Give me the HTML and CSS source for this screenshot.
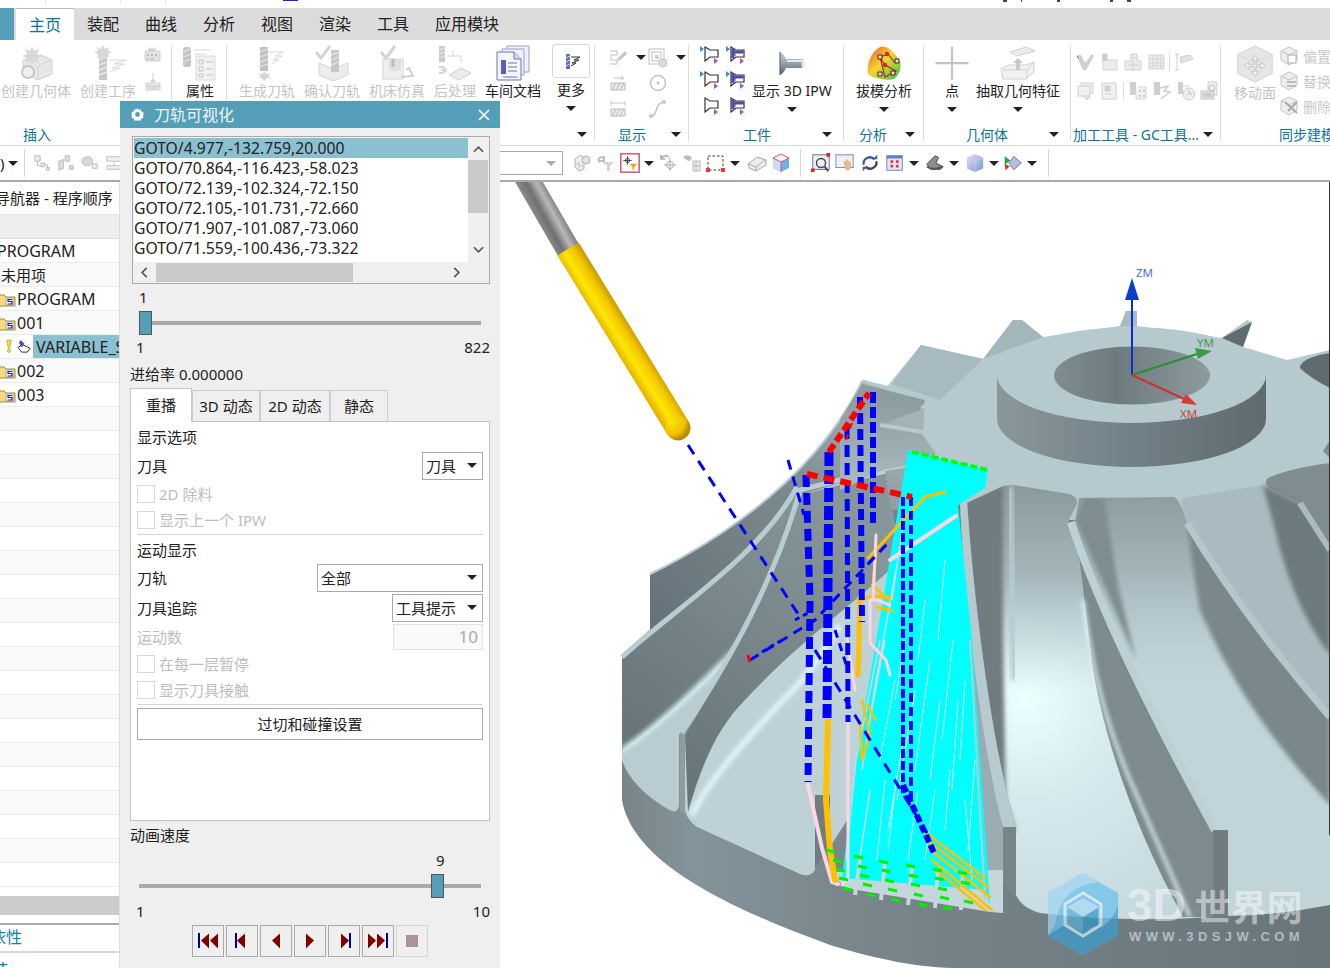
FILE: index.html
```html
<!DOCTYPE html>
<html lang="zh">
<head>
<meta charset="utf-8">
<title>刀轨可视化</title>
<link rel="stylesheet" href="styles.css">
</head>
<body>
<svg class="sprite" aria-hidden="true">
<defs>
<linearGradient id="gIpw" x1="0" y1="0" x2="0" y2="1"><stop offset="0" stop-color="#c6d0d8"/><stop offset=".35" stop-color="#a4b2bc"/><stop offset="1" stop-color="#56646e"/></linearGradient>
<linearGradient id="gDraft" x1="0" y1="0" x2="1" y2="1"><stop offset="0" stop-color="#f04a2a"/><stop offset=".45" stop-color="#f6d52c"/><stop offset="1" stop-color="#37c24a"/></linearGradient>
<linearGradient id="gCube" x1="0" y1="0" x2="1" y2="1"><stop offset="0" stop-color="#dfe6f6"/><stop offset="1" stop-color="#7f93d0"/></linearGradient>
</defs>
<symbol id="s-geom" viewBox="0 0 36 36"><path d="M5 15l18-5 11 5v14l-14 6-15-7z" fill="#e6e6e6" stroke="#cfcfcf"/><path d="M20 21v14M20 21l14-6" fill="none" stroke="#d4d4d4"/><circle cx="10" cy="27" r="6" fill="#f0f0f0" stroke="#bdbdbd" stroke-width="1.5"/><path d="M14 1l2 5 5-2-2 5 5 2-5 2 2 5-5-2-2 5-2-5-5 2 2-5-5-2 5-2-2-5 5 2z" fill="#d8d8d8"/></symbol>
<symbol id="s-oper" viewBox="0 0 36 36"><path d="M9 11h8v24H9z" fill="#c6c6c6"/><path d="M9 15l8-3M9 20l8-3M9 25l8-3M9 30l8-3" stroke="#e9e9e9" stroke-width="1.5"/><path d="M18 15h18l-12 4h10l-12 4h8l-10 4" fill="none" stroke="#d8d8d8"/><path d="M13 0l2 4 4-2-1 4 4 1-4 2 1 4-4-1-2 3-2-3-4 1 1-4-4-2 4-1-1-4 4 2z" fill="#d8d8d8"/></symbol>
<symbol id="s-sm1" viewBox="0 0 20 20"><rect x="2" y="6" width="15" height="10" rx="1" fill="#e2e2e2" stroke="#cfcfcf"/><path d="M4 9h2v2H4zM8 9h2v2H8zM12 9h2v2h-2zM4 13h2v2H4zM8 13h2v2H8z" fill="#bcbcbc"/><path d="M9 1l1 3 3-1-1 3H6L5 3l3 1z" fill="#cfcfcf"/></symbol>
<symbol id="s-sm2" viewBox="0 0 20 20"><path d="M3 11h14v7H3z" fill="#ececec" stroke="#cfcfcf"/><path d="M3 14h14M5 16h10" stroke="#c4c4c4"/><path d="M7 10l3-4 3 4z" fill="#d2d2d2"/><path d="M10 1v5" stroke="#d2d2d2"/></symbol>
<symbol id="s-attr" viewBox="0 0 36 36"><rect x="1" y="2" width="8" height="20" rx="3" fill="#c4c4c4"/><path d="M1 7l8-3M1 12l8-3M1 17l8-3" stroke="#ebebeb"/><path d="M12 5h16M12 9h12" stroke="#d9d9d9"/><path d="M14 11h19v24H14z" fill="#f2f2f2" stroke="#d8d8d8"/><path d="M17 15h4v4h-4zM17 22h4v4h-4zM17 29h4v3h-4z" fill="none" stroke="#c5c5c5"/><path d="M24 17h7M24 24h7M24 30h7" stroke="#c5c5c5"/></symbol>
<symbol id="s-gen" viewBox="0 0 36 36"><rect x="11" y="2" width="8" height="24" fill="#c2c2c2"/><path d="M11 7l8-3M11 12l8-3M11 17l8-3M11 22l8-3" stroke="#ebebeb"/><path d="M20 7h15l-9 4h7l-9 4h6l-8 4" fill="none" stroke="#d9d9d9"/><path d="M15 26l2 3 4-1-2 3 3 2-4 0-3 3-2-3-4 0 3-2-2-3 4 1z" fill="#d4d4d4"/></symbol>
<symbol id="s-verify" viewBox="0 0 36 36"><path d="M5 18l14 6 15-6v12l-15 6-14-6z" fill="#ececec" stroke="#d4d4d4"/><rect x="17" y="5" width="8" height="22" fill="#c8c8c8"/><path d="M17 10l8-3M17 15l8-3M17 20l8-3" stroke="#ececec"/><path d="M2 7l5 6 9-12" fill="none" stroke="#d4d4d4" stroke-width="3"/></symbol>
<symbol id="s-sim" viewBox="0 0 36 36"><path d="M4 14h20v20H4z" fill="#efefef" stroke="#d4d4d4"/><path d="M10 14h12v12H10z" fill="#e0e0e0"/><path d="M14 14v8" stroke="#bcbcbc" stroke-width="3"/><path d="M22 32l12-1-4-8-3 2" fill="none" stroke="#d0d0d0" stroke-width="2"/><path d="M2 7l5 6 9-12" fill="none" stroke="#d4d4d4" stroke-width="3"/></symbol>
<symbol id="s-post" viewBox="0 0 36 36"><rect x="2" y="1" width="6" height="16" fill="#c8c8c8"/><path d="M2 5l6-2M2 9l6-2M2 13l6-2" stroke="#ececec"/><path d="M10 11h14v6M16 11v-6" fill="none" stroke="#d4d4d4"/><path d="M12 30l12-7 10 5-12 7z" fill="#ececec" stroke="#d0d0d0"/><path d="M2 22h4l3 3-3 3H2M9 25H4" fill="none" stroke="#d4d4d4" stroke-width="2"/></symbol>
<symbol id="s-doc" viewBox="0 0 36 36"><path d="M12 1h22v26H12z" fill="#eef0fa" stroke="#9c9fd0"/><path d="M7 4h22v26H7z" fill="#eef0fa" stroke="#9c9fd0"/><path d="M2 7h17l7 7v21H2z" fill="#f4f5fc" stroke="#6f72b8"/><path d="M19 7v7h7" fill="#d8dbf4" stroke="#6f72b8"/><rect x="6" y="15" width="5" height="14" fill="#5a60b5"/><path d="M13 18h9M13 22h9M13 26h9M8 32h14" stroke="#6f72b8"/></symbol>
<symbol id="s-more" viewBox="0 0 20 20"><rect x="5" y="3" width="4" height="15" fill="#6569b8"/><path d="M5 7l4-2M5 11l4-2M5 15l4-2" stroke="#d6d7f0"/><path d="M10 6h9l-6 3h5l-7 3h4l-5 3" fill="none" stroke="#333"/></symbol>
<symbol id="s-d1" viewBox="0 0 20 20"><path d="M2 3h7v4H3v5h6v4H2" fill="none" stroke="#bfbfbf"/><path d="M9 11l8-8 2 3-8 7z" fill="#c8c8c8"/></symbol>
<symbol id="s-d2" viewBox="0 0 20 20"><rect x="1" y="1" width="15" height="15" fill="none" stroke="#bdbdbd"/><rect x="4" y="4" width="9" height="9" fill="none" stroke="#bdbdbd"/><rect x="7" y="7" width="4" height="4" fill="#d0d0d0"/><circle cx="15" cy="15" r="4" fill="#dcdcdc" stroke="#c4c4c4"/></symbol>
<symbol id="s-d3" viewBox="0 0 20 20"><path d="M3 10h14v7H3z" fill="#eaeaea" stroke="#bcbcbc"/><path d="M4 17l4-7M8 17l4-7M12 17l4-7" stroke="#bcbcbc"/><path d="M6 5h10M13 3l3 2-3 2" fill="none" stroke="#c6c6c6"/></symbol>
<symbol id="s-d4" viewBox="0 0 20 20"><circle cx="10" cy="10" r="7.5" fill="none" stroke="#c4c4c4" stroke-width="1.5"/><circle cx="10" cy="10" r="1.5" fill="#c0c0c0"/></symbol>
<symbol id="s-d5" viewBox="0 0 20 20"><path d="M3 10h14v7H3z" fill="#eaeaea" stroke="#bcbcbc"/><path d="M4 17l4-7M8 17l4-7M12 17l4-7" stroke="#bcbcbc"/><path d="M3 4h14M3 2v5M17 2v5" fill="none" stroke="#c6c6c6"/></symbol>
<symbol id="s-d6" viewBox="0 0 20 20"><path d="M3 17c7 1 3-13 13-14" fill="none" stroke="#c4c4c4" stroke-width="1.5"/><circle cx="3" cy="17" r="2" fill="#c8c8c8"/><circle cx="16" cy="3" r="2" fill="#c8c8c8"/></symbol>
<symbol id="s-wa" viewBox="0 0 20 20"><path d="M5 2l5 3h8v7h-8l-5 4z" fill="#fff" stroke="#333" stroke-width="1.2"/><path d="M0 1l4 3-4 3z" fill="#3d8ccb"/><path d="M14 13l4 3-4 3z" fill="#b94ac9"/></symbol>
<symbol id="s-wb" viewBox="0 0 20 20"><path d="M5 2l5 3h8v7h-8l-5 4z" fill="#fff" stroke="#333" stroke-width="1.2"/><path d="M8 6h9v2H9v3" fill="#4a4aa8" stroke="#4a4aa8"/><path d="M7 4v9" stroke="#4a4aa8" stroke-width="3"/><path d="M0 1l4 3-4 3z" fill="#3d8ccb"/><path d="M14 13l4 3-4 3z" fill="#b94ac9"/></symbol>
<symbol id="s-wc" viewBox="0 0 20 20"><path d="M5 2l5 3h8v7h-8l-5 4z" fill="#fff" stroke="#333" stroke-width="1.2"/><path d="M14 13l4 3-4 3z" fill="#b94ac9"/></symbol>
<symbol id="s-wd" viewBox="0 0 20 20"><path d="M5 2l5 3h8v7h-8l-5 4z" fill="#fff" stroke="#333" stroke-width="1.2"/><path d="M8 6h9v2H9v3" fill="#4a4aa8" stroke="#4a4aa8"/><path d="M7 4v9" stroke="#4a4aa8" stroke-width="3"/><path d="M14 13l4 3-4 3z" fill="#b94ac9"/></symbol>
<symbol id="s-ipw" viewBox="0 0 36 36"><path d="M6 7q4 2 6 7h17v9H12q-2 5-6 7z" fill="url(#gIpw)"/><path d="M6 7v23" stroke="#4c5862"/><path d="M13 16h15" stroke="#e4eaee" stroke-width="2"/><ellipse cx="29" cy="18.500" rx="1.500" ry="4.500" fill="#dde4ea"/></symbol>
<symbol id="s-draft" viewBox="0 0 36 36"><path d="M14 2c8-2 14 5 20 14 2 6-1 15-6 18-8 2-22-1-26-5C0 19 6 6 14 2z" fill="url(#gDraft)"/><path d="M14 12l5 20 11-6-11-6zM14 12l8-3 7 9" fill="none" stroke="#b02a2a" stroke-width="1.2"/><path d="M12 10h4v4h-4zM25 26h4v4h-4zM12 27h4v4h-4zM29 14h4v4h-4z" fill="#f6e86a" stroke="#3a1d6e"/><circle cx="21" cy="9" r="2.2" fill="#c92a2a"/><circle cx="19" cy="20" r="2.2" fill="#c92a2a"/></symbol>
<symbol id="s-pt" viewBox="0 0 24 24"><path d="M12 1v22M1 12h22" stroke="#c4c4c4" stroke-width="1.5"/></symbol>
<symbol id="s-ext" viewBox="0 0 36 36"><path d="M10 7l16-5 9 4-18 5z" fill="#ececec" stroke="#d0d0d0"/><path d="M1 24l8-4h17l8-3v10l-8 7H3z" fill="#f1f1f1" stroke="#cfcfcf"/><path d="M3 25h24l7-8M27 25v9" fill="none" stroke="#cfcfcf"/><path d="M18 13l5 5h-3v7h-4v-7h-3z" fill="#c8c8c8"/></symbol>
<symbol id="s-g1" viewBox="0 0 20 20"><path d="M1 3l5 0 4 8 7-9 2 2-8 14h-3z" fill="#d0d0d0"/><path d="M2 3l2 2 0 3" stroke="#e8e8e8"/></symbol>
<symbol id="s-g2" viewBox="0 0 20 20"><path d="M4 2h4v6h10v10H4z" fill="#ececec" stroke="#d6d6d6"/><rect x="3" y="2" width="5" height="7" fill="#cfcfcf"/></symbol>
<symbol id="s-g3" viewBox="0 0 20 20"><path d="M2 9h6V2h6v7h4v9H2z" fill="#ececec" stroke="#cfcfcf"/><path d="M8 6h6M5 13h10M10 9v9" stroke="#cfcfcf"/></symbol>
<symbol id="s-g4" viewBox="0 0 20 20"><rect x="2" y="3" width="15" height="14" fill="#eee" stroke="#d4d4d4"/><path d="M2 7h15M2 11h15M2 14h15M6 3v14M10 3v14M14 3v14" stroke="#d4d4d4"/></symbol>
<symbol id="s-g5" viewBox="0 0 20 20"><path d="M3 2v16M1 2h4M1 18h4" stroke="#cfcfcf" fill="none"/><path d="M6 5l10-2 3 4-12 4z" fill="#e4e4e4" stroke="#cfcfcf"/></symbol>
<symbol id="s-g6" viewBox="0 0 20 20"><rect x="6" y="2" width="12" height="10" fill="#f0f0f0" stroke="#d0d0d0"/><rect x="3" y="5" width="12" height="10" fill="#f0f0f0" stroke="#d0d0d0"/><path d="M8 15l4 4 3-4" fill="#e0e0e0" stroke="#cfcfcf"/></symbol>
<symbol id="s-g7" viewBox="0 0 20 20"><rect x="3" y="2" width="14" height="16" fill="#f2f2f2" stroke="#cfcfcf"/><path d="M6 5h5v5H6zM6 13h8" fill="#d0d0d0" stroke="#cfcfcf"/></symbol>
<symbol id="s-g8" viewBox="0 0 20 20"><rect x="2" y="1" width="6" height="13" fill="#cfcfcf"/><path d="M10 6h8v12H8v-5" fill="#f2f2f2" stroke="#d4d4d4"/><path d="M11 9h2v2h-2zM15 9h2v2h-2zM11 14h2v2h-2zM15 14h2v2h-2z" fill="#c8c8c8"/></symbol>
<symbol id="s-g9" viewBox="0 0 20 20"><rect x="2" y="1" width="6" height="13" fill="#cfcfcf"/><path d="M8 7l8-2-4 5 6 1-9 7" fill="none" stroke="#cfcfcf" stroke-width="1.5"/></symbol>
<symbol id="s-g10" viewBox="0 0 20 20"><rect x="2" y="1" width="5" height="12" fill="#cfcfcf"/><path d="M7 5h7" stroke="#cfcfcf"/><circle cx="13" cy="13" r="6" fill="#ededed" stroke="#cccccc"/><path d="M13 9v4h3" stroke="#bbb" fill="none"/></symbol>
<symbol id="s-g11" viewBox="0 0 20 20"><path d="M8 1h9v13H8z" fill="#eee" stroke="#cfcfcf"/><path d="M1 10h13v8H1z" fill="#dedede" stroke="#c8c8c8"/><circle cx="12" cy="7" r="3" fill="none" stroke="#bbb"/><path d="M3 13h9M3 15h9" stroke="#bbb"/></symbol>
<symbol id="s-move" viewBox="0 0 44 44"><path d="M22 1l20 10v22L22 43 2 33V11z" fill="#e6e6e6" stroke="#cfcfcf"/><path d="M2 11l20 10 20-10" fill="none" stroke="#d4d4d4"/><path d="M22 12l4 5h-3v6h6v-3l5 4-5 4v-3h-6v6h3l-4 5-4-5h3v-6h-6v3l-5-4 5-4v3h6v-6h-3z" fill="#f7f7f7" stroke="#bdbdbd"/></symbol>
<symbol id="s-y1" viewBox="0 0 20 20"><path d="M1 5l8-4 8 4v9l-8 5-8-5z" fill="#eee" stroke="#c4c4c4"/><path d="M1 5l8 4 8-4" fill="none" stroke="#c4c4c4"/><rect x="8" y="9" width="8" height="8" fill="#fff" stroke="#aaa"/></symbol>
<symbol id="s-y2" viewBox="0 0 20 20"><path d="M1 5l8-4 8 4v9l-8 5-8-5z" fill="#eee" stroke="#c4c4c4"/><path d="M1 5l8 4 8-4" fill="none" stroke="#c4c4c4"/><path d="M7 11h9M7 15h9" stroke="#aaa" stroke-width="1.5"/></symbol>
<symbol id="s-y3" viewBox="0 0 20 20"><path d="M1 5l8-4 8 4v9l-8 5-8-5z" fill="#eee" stroke="#c4c4c4"/><path d="M1 5l8 4 8-4" fill="none" stroke="#c4c4c4"/><path d="M5 6l12 11M8 15l9-9" stroke="#aaa" stroke-width="2"/></symbol>
<symbol id="s-q1" viewBox="0 0 20 20"><path d="M2 2h6v6H2zM9 10h4v4H9zM15 15h3v3h-3z" fill="#ececec" stroke="#b6b6b6"/><path d="M5 8v5h4M13 12h3v3" fill="none" stroke="#b6b6b6"/></symbol>
<symbol id="s-q2" viewBox="0 0 20 20"><path d="M2 8l5-2v10l-5 2zM9 2h5v6H9zM14 13h4v4h-4z" fill="#ddd" stroke="#b6b6b6"/></symbol>
<symbol id="s-q3" viewBox="0 0 20 20"><ellipse cx="7" cy="8" rx="6" ry="5" fill="#d8d8d8" stroke="#bbb"/><path d="M13 11h5v5h-5z" fill="#f0f0f0" stroke="#b6b6b6"/></symbol>
<symbol id="s-q5" viewBox="0 0 20 20"><path d="M2 3h16v5H2zM2 13h16v4H2z" fill="#f0f0f0" stroke="#bbb"/><path d="M10 8v5" stroke="#bbb"/></symbol>
<symbol id="s-f1" viewBox="0 0 20 20"><path d="M3 14V6l6-4 3 4v10l-5 2z" fill="#f0f0f0" stroke="#b4b4b4"/><circle cx="14" cy="7" r="4" fill="#e0e0e0" stroke="#b4b4b4"/><path d="M7 8v8M3 10l9 4" stroke="#c4c4c4"/></symbol>
<symbol id="s-f2" viewBox="0 0 20 20"><path d="M4 9c-4-2 0-6 4-4M8 3v5H3" fill="none" stroke="#bdbdbd" stroke-width="2"/><path d="M6 9h12l-4 4v5h-3v-5z" fill="#d6d6d6"/></symbol>
<symbol id="s-f3" viewBox="0 0 24 24"><rect x="1" y="1" width="22" height="22" fill="#fff" stroke="#c83c46" stroke-width="1.5"/><path d="M9 4v10M4 9h10" stroke="#333"/><circle cx="9" cy="9" r="2.5" fill="none" stroke="#333"/><path d="M12 13h9l-4 4v3h-2v-3z" fill="#e8a81c"/></symbol>
<symbol id="s-f4" viewBox="0 0 20 20"><path d="M12 5v13M6 12h12" stroke="#aaa"/><circle cx="12" cy="12" r="3.5" fill="none" stroke="#aaa"/><path d="M3 6c2-4 6-4 8-2M3 2v4h4" fill="none" stroke="#aaa" stroke-width="1.5"/></symbol>
<symbol id="s-f5" viewBox="0 0 20 20"><path d="M1 4c3-3 8-2 9 1l-2 3c-3-1-5-1-7-4z" fill="#bdbdbd"/><path d="M11 8h7v10h-7z" fill="#eee" stroke="#b4b4b4"/><path d="M14 8v10M11 13h7" stroke="#b4b4b4"/></symbol>
<symbol id="s-f6" viewBox="0 0 20 20"><rect x="2" y="3" width="15" height="14" fill="none" stroke="#333" stroke-dasharray="2.5 2"/><path d="M0 15h4v4H0zM15 15h4v4h-4z" fill="#e5393b"/></symbol>
<symbol id="s-f7" viewBox="0 0 20 20"><path d="M1 11l9-7 9 3v5l-10 6-7-3z" fill="#ececec" stroke="#a8a8a8"/><path d="M2 11l7 3 9-7M9 14v4" fill="none" stroke="#a8a8a8"/></symbol>
<symbol id="s-f8" viewBox="0 0 20 20"><path d="M10 1l8 4v10l-8 4-8-4V5z" fill="#6fb0e6"/><path d="M2 5l8 4v10l-8-4z" fill="#c8def2"/><path d="M10 1l8 4-8 4-8-4z" fill="#f2f4fa" stroke="#d85a6a"/><path d="M10 9v10" stroke="#d85a6a"/></symbol>
<symbol id="s-v1" viewBox="0 0 22 22"><rect x="2" y="2" width="18" height="16" fill="#eef1fa" stroke="#4f68a8"/><circle cx="11" cy="11" r="5" fill="none" stroke="#444" stroke-width="1.5"/><path d="M15 15l4 5" stroke="#444" stroke-width="2"/><path d="M0 17h4v4H0zM17 0h4v4h-4z" fill="#d62b2b"/></symbol>
<symbol id="s-v2" viewBox="0 0 22 22"><rect x="1" y="2" width="19" height="14" fill="#eef1fa" stroke="#6d84b8"/><path d="M9 9l3 0 1-3 2 3 2 0 1 5-2 5h-4z" fill="#e8b986"/></symbol>
<symbol id="s-v3" viewBox="0 0 22 22"><path d="M4 13a7 7 0 0 1 12-6" fill="none" stroke="#3c5aa6" stroke-width="2.5"/><path d="M18 9a7 7 0 0 1-12 6" fill="none" stroke="#444" stroke-width="2.5"/><path d="M14 7h5V2zM8 15H3v5z" fill="#3c5aa6"/></symbol>
<symbol id="s-v4" viewBox="0 0 22 22"><rect x="2" y="3" width="17" height="16" fill="#e2e6f6" stroke="#6d7cc0"/><rect x="2" y="3" width="17" height="3" fill="#6d7cc0"/><path d="M6 8h3v3H6zM12 8h3v3h-3zM6 13h3v3H6zM12 13h3v3h-3z" fill="#e23b3b"/></symbol>
<symbol id="s-v5" viewBox="0 0 22 22"><path d="M2 12l9-9 4 2-3 6 8 4-3 3H6z" fill="#8c8c8c" stroke="#444"/><path d="M2 15c4 3 12 3 17 0" fill="none" stroke="#555" stroke-width="2"/></symbol>
<symbol id="s-v6" viewBox="0 0 22 22"><path d="M11 1l9 4v12l-9 4-9-4V5z" fill="url(#gCube)"/><path d="M2 5l9 4 9-4M11 9v12" fill="none" stroke="#c6cfe8"/></symbol>
<symbol id="s-v7" viewBox="0 0 24 22"><path d="M13 3l9 8-9 8-6-8z" fill="#b4bedd" stroke="#5b6ea6"/><path d="M2 3l7 5-7 5z" fill="#27a744"/><path d="M2 12l6 3-5 5z" fill="#d8323c"/></symbol>
<symbol id="s-folder" viewBox="0 0 16 16"><path d="M-4 3h8l2 2h9v9H-4z" fill="#f6dc7a" stroke="#9a8a46"/><rect x="6" y="6" width="7" height="7" fill="#fff" stroke="#8a8a8a" stroke-width=".6"/><path d="M12 7.5H8V9.5h4V12H7.5" fill="none" stroke="#1414d0" stroke-width="1.2"/></symbol>
<symbol id="s-warn" viewBox="0 0 10 18"><path d="M2 1h6L6 11H4z" fill="#f6dc3c" stroke="#a0921c" stroke-width=".7"/><circle cx="5" cy="14.5" r="2" fill="#f6dc3c" stroke="#a0921c" stroke-width=".7"/></symbol>
<symbol id="s-opn" viewBox="0 0 16 16"><path d="M1 9l5-3 8 4-3 4H5z" fill="#fff" stroke="#222"/><path d="M4 1l4 4-3 4-3-5z" fill="#4a55b8"/></symbol>
<symbol id="p-first" viewBox="0 0 20 16"><rect y="0" width="2" height="15" fill="#000080"/><path d="M3 7.5l8-7v15zM12 7.5l8-7v15z" fill="#800000"/></symbol>
<symbol id="p-prev" viewBox="0 0 20 16"><rect x="3" width="2" height="15" fill="#000080"/><path d="M5 7.5l8-7v15z" fill="#800000"/></symbol>
<symbol id="p-back" viewBox="0 0 20 16"><path d="M6 7.5l8-7v15z" fill="#800000"/></symbol>
<symbol id="p-play" viewBox="0 0 20 16"><path d="M14 7.5l-8-7v15z" fill="#800000"/></symbol>
<symbol id="p-next" viewBox="0 0 20 16"><rect x="15" width="2" height="15" fill="#000080"/><path d="M15 7.5l-8-7v15z" fill="#800000"/></symbol>
<symbol id="p-last" viewBox="0 0 20 16"><rect x="18" width="2" height="15" fill="#000080"/><path d="M17 7.5l-8-7v15zM8 7.5l-8-7v15z" fill="#800000"/></symbol>
</svg>

<div class="app">
  <div class="topstrip">
    <i class="tick t1"></i><i class="tick t2"></i><i class="tick t3"></i><i class="blueb"></i>
    <i class="mark m-a"></i><i class="mark m-b"></i><i class="mark m-c"></i><i class="mark m-d"></i><i class="mark m-e"></i>
  </div>

  <div class="tabbar">
    <span class="filebtn"></span>
    <span class="tab active">主页</span><span class="tab">装配</span><span class="tab">曲线</span><span class="tab">分析</span><span class="tab">视图</span><span class="tab">渲染</span><span class="tab">工具</span><span class="tab">应用模块</span>
  </div>

  <div class="ribbon">
    <section class="grp g-insert">
      <div class="grp-body">
        <div class="tool"><svg class="ic36"><use href="#s-geom"/></svg><span class="off">创建几何体</span></div>
        <div class="tool"><svg class="ic36"><use href="#s-oper"/></svg><span class="off">创建工序</span></div>
        <div class="smcol"><svg class="ic20"><use href="#s-sm1"/></svg><svg class="ic20"><use href="#s-sm2"/></svg></div>
        <i class="vsep"></i>
        <div class="tool t-attr"><svg class="ic36"><use href="#s-attr"/></svg><span>属性</span></div>
        <i class="vsep v2"></i>
        <div class="tool"><svg class="ic36"><use href="#s-gen"/></svg><span class="off">生成刀轨</span></div>
        <div class="tool"><svg class="ic36"><use href="#s-verify"/></svg><span class="off">确认刀轨</span></div>
        <div class="tool"><svg class="ic36"><use href="#s-sim"/></svg><span class="off">机床仿真</span></div>
        <div class="tool"><svg class="ic36"><use href="#s-post"/></svg><span class="off">后处理</span></div>
        <div class="tool"><svg class="ic36"><use href="#s-doc"/></svg><span>车间文档</span></div>
        <div class="tool t-more"><span class="morebox"><svg class="ic20"><use href="#s-more"/></svg></span><span>更多</span><i class="arr"></i></div>
      </div>
      <div class="grp-label"><span class="lb-insert">插入</span><i class="arr"></i></div>
    </section>

    <section class="grp g-show">
      <div class="grp-body">
        <div class="showgrid">
          <span class="cell"><svg class="ic20"><use href="#s-d1"/></svg><i class="arr"></i></span>
          <span class="cell"><svg class="ic20"><use href="#s-d2"/></svg><i class="arr"></i></span>
          <span class="cell"><svg class="ic20"><use href="#s-d3"/></svg></span>
          <span class="cell"><svg class="ic20"><use href="#s-d4"/></svg></span>
          <span class="cell"><svg class="ic20"><use href="#s-d5"/></svg></span>
          <span class="cell"><svg class="ic20"><use href="#s-d6"/></svg></span>
        </div>
      </div>
      <div class="grp-label"><span class="lb-show">显示</span><i class="arr"></i></div>
    </section>

    <section class="grp g-part">
      <div class="grp-body">
        <div class="wpgrid">
          <svg class="ic20"><use href="#s-wa"/></svg><svg class="ic20"><use href="#s-wb"/></svg>
          <svg class="ic20"><use href="#s-wa"/></svg><svg class="ic20"><use href="#s-wb"/></svg>
          <svg class="ic20"><use href="#s-wc"/></svg><svg class="ic20"><use href="#s-wd"/></svg>
        </div>
        <div class="tool t-ipw"><svg class="ic36"><use href="#s-ipw"/></svg><span>显示 3D IPW</span><i class="arr"></i></div>
      </div>
      <div class="grp-label"><span class="lb-part">工件</span><i class="arr"></i></div>
    </section>

    <section class="grp g-ana">
      <div class="grp-body">
        <div class="tool t-draft"><svg class="ic36"><use href="#s-draft"/></svg><span>拔模分析</span><i class="arr"></i></div>
      </div>
      <div class="grp-label"><span class="lb-ana">分析</span><i class="arr"></i></div>
    </section>

    <section class="grp g-body">
      <div class="grp-body">
        <div class="tool t-pt"><svg class="ic36"><use href="#s-pt"/></svg><span>点</span><i class="arr"></i></div>
        <div class="tool t-ext"><svg class="ic36"><use href="#s-ext"/></svg><span>抽取几何特征</span><i class="arr"></i></div>
      </div>
      <div class="grp-label"><span class="lb-body">几何体</span><i class="arr"></i></div>
    </section>

    <section class="grp g-gc">
      <div class="grp-body gc-body">
        <div class="gcrow">
          <svg class="ic20"><use href="#s-g1"/></svg><svg class="ic20"><use href="#s-g2"/></svg><svg class="ic20"><use href="#s-g3"/></svg><svg class="ic20"><use href="#s-g4"/></svg><i class="gcsep"></i><svg class="ic20"><use href="#s-g5"/></svg>
        </div>
        <div class="gcrow">
          <svg class="ic20"><use href="#s-g6"/></svg><svg class="ic20"><use href="#s-g7"/></svg><i class="gcsep"></i><svg class="ic20"><use href="#s-g8"/></svg><svg class="ic20"><use href="#s-g9"/></svg><svg class="ic20"><use href="#s-g10"/></svg><svg class="ic20"><use href="#s-g11"/></svg>
        </div>
      </div>
      <div class="grp-label"><span class="lb-gc">加工工具 - GC工具...</span><i class="arr"></i></div>
    </section>

    <section class="grp g-sync">
      <div class="grp-body">
        <div class="tool t-move"><svg class="ic36"><use href="#s-move"/></svg><span class="off">移动面</span></div>
        <div class="synclist">
          <span class="syncrow"><svg class="ic20"><use href="#s-y1"/></svg>偏置区域</span>
          <span class="syncrow"><svg class="ic20"><use href="#s-y2"/></svg>替换面</span>
          <span class="syncrow"><svg class="ic20"><use href="#s-y3"/></svg>删除面</span>
        </div>
      </div>
      <div class="grp-label"><span class="lb-sync">同步建模</span></div>
    </section>
  </div>

  <div class="quickbar">
    <span class="qtext">)</span><i class="arr q-first"></i><i class="qsep q-s0"></i>
    <span class="qi"><svg class="ic18"><use href="#s-q1"/></svg></span><span class="qi"><svg class="ic18"><use href="#s-q2"/></svg></span><span class="qi"><svg class="ic18"><use href="#s-q3"/></svg></span><span class="qi"><svg class="ic18"><use href="#s-q5"/></svg></span>
    <span class="combo"><i class="arr arr-gray"></i></span>
    <span class="qi q-f1"><svg class="ic20"><use href="#s-f1"/></svg></span>
    <span class="qi"><svg class="ic20"><use href="#s-f2"/></svg></span>
    <span class="qi"><svg class="ic20"><use href="#s-f3"/></svg></span><span class="qa"><i class="arr"></i></span>
    <span class="qi"><svg class="ic20"><use href="#s-f4"/></svg></span>
    <span class="qi"><svg class="ic20"><use href="#s-f5"/></svg></span>
    <span class="qi"><svg class="ic20"><use href="#s-f6"/></svg></span><span class="qa"><i class="arr"></i></span>
    <span class="qi q-m3"><svg class="ic20"><use href="#s-f7"/></svg></span>
    <span class="qi"><svg class="ic20"><use href="#s-f8"/></svg></span>
    <i class="qsep q-s1"></i>
    <span class="qi"><svg class="ic20"><use href="#s-v1"/></svg></span>
    <span class="qi"><svg class="ic20"><use href="#s-v2"/></svg></span>
    <span class="qi q-m1"><svg class="ic20"><use href="#s-v3"/></svg></span>
    <span class="qi q-m1"><svg class="ic20"><use href="#s-v4"/></svg></span><span class="qa"><i class="arr"></i></span>
    <span class="qi q-m2"><svg class="ic20"><use href="#s-v5"/></svg></span><span class="qa"><i class="arr"></i></span>
    <span class="qi q-m2"><svg class="ic20"><use href="#s-v6"/></svg></span><span class="qa"><i class="arr"></i></span>
    <span class="qi"><svg class="ic20"><use href="#s-v7"/></svg></span><span class="qa"><i class="arr"></i></span>
    <i class="qsep q-s2"></i>
  </div>

  <div class="main">
    <aside class="nav">
      <div class="nav-title">导航器 - 程序顺序</div>
      <div class="nav-head"></div>
      <div class="rows">
        <div class="row r-crop">PROGRAM</div>
        <div class="row r-nofold">未用项</div>
        <div class="row"><svg class="fold"><use href="#s-folder"/></svg>PROGRAM</div>
        <div class="row"><svg class="fold"><use href="#s-folder"/></svg>001</div>
        <div class="row r-op"><svg class="warn"><use href="#s-warn"/></svg><svg class="opn"><use href="#s-opn"/></svg><span class="sel">VARIABLE_S</span></div>
        <div class="row"><svg class="fold"><use href="#s-folder"/></svg>002</div>
        <div class="row"><svg class="fold"><use href="#s-folder"/></svg>003</div>
        <div class="row"></div><div class="row"></div><div class="row"></div><div class="row"></div><div class="row"></div><div class="row"></div><div class="row"></div><div class="row"></div><div class="row"></div><div class="row"></div><div class="row"></div><div class="row"></div><div class="row"></div><div class="row"></div><div class="row"></div><div class="row"></div><div class="row"></div><div class="row"></div><div class="row"></div><div class="row"></div>
      </div>
      <div class="nav-hscroll"></div>
      <div class="nav-acc">相依性</div>
      <div class="nav-acc nav-acc2">细节</div>
    </aside>

    <div class="viewport">
      <svg class="scene" viewBox="120 182 1210 786" role="img" aria-label="叶轮刀轨视图">
        <defs>
          <linearGradient id="base" gradientUnits="userSpaceOnUse" x1="622" y1="0" x2="1330" y2="0"><stop offset="0" stop-color="#78868a"/><stop offset=".1" stop-color="#84929a"/><stop offset=".35" stop-color="#78868b"/><stop offset="1" stop-color="#68757a"/></linearGradient>
          <radialGradient id="floor" gradientUnits="userSpaceOnUse" cx="1025" cy="700" r="310"><stop offset="0" stop-color="#ebffff"/><stop offset=".35" stop-color="#d4e8ed"/><stop offset="1" stop-color="#bdd1d7"/></radialGradient>
          <linearGradient id="pocketTop" gradientUnits="userSpaceOnUse" x1="0" y1="487" x2="0" y2="690"><stop offset="0" stop-color="#8b9a9e"/><stop offset=".45" stop-color="#a6b8bd"/><stop offset="1" stop-color="#bcd0d6" stop-opacity="0"/></linearGradient>
          <linearGradient id="wallL" gradientUnits="userSpaceOnUse" x1="650" y1="620" x2="880" y2="400"><stop offset="0" stop-color="#65727a"/><stop offset=".6" stop-color="#7c8a8e"/><stop offset="1" stop-color="#a3b3b7"/></linearGradient>
          <linearGradient id="wallD" gradientUnits="userSpaceOnUse" x1="640" y1="740" x2="830" y2="500"><stop offset="0" stop-color="#697679"/><stop offset="1" stop-color="#87969a"/></linearGradient>
          <linearGradient id="wallT" gradientUnits="userSpaceOnUse" x1="0" y1="400" x2="0" y2="480"><stop offset="0" stop-color="#8d9ca0"/><stop offset="1" stop-color="#a8babf"/></linearGradient>
          <linearGradient id="bossSide" gradientUnits="userSpaceOnUse" x1="997" y1="0" x2="1266" y2="0"><stop offset="0" stop-color="#8a979b"/><stop offset=".45" stop-color="#74828a"/><stop offset="1" stop-color="#5e6a6e"/></linearGradient>
          <linearGradient id="hole" gradientUnits="userSpaceOnUse" x1="1054" y1="0" x2="1210" y2="0"><stop offset="0" stop-color="#808e92"/><stop offset=".4" stop-color="#6d7a7e"/><stop offset="1" stop-color="#8d9a9e"/></linearGradient>
          <linearGradient id="yel" gradientUnits="userSpaceOnUse" x1="612" y1="345" x2="634" y2="331"><stop offset="0" stop-color="#e2b400"/><stop offset=".35" stop-color="#ffe600"/><stop offset=".7" stop-color="#f4c800"/><stop offset="1" stop-color="#c89a00"/></linearGradient>
          <linearGradient id="gry" gradientUnits="userSpaceOnUse" x1="534" y1="218" x2="556" y2="206"><stop offset="0" stop-color="#8e8e8e"/><stop offset=".4" stop-color="#707070"/><stop offset=".75" stop-color="#b8b8b8"/><stop offset="1" stop-color="#8a8a8a"/></linearGradient>
          <radialGradient id="cap" gradientUnits="userSpaceOnUse" cx="672" cy="422" r="18"><stop offset="0" stop-color="#ffe600"/><stop offset=".7" stop-color="#eec000"/><stop offset="1" stop-color="#b88c00"/></radialGradient>
          <filter id="b2" x="-20%" y="-20%" width="140%" height="140%"><feGaussianBlur stdDeviation="2.2"/></filter>
          <clipPath id="pocketClip1"><path d="M967,503L1003,486Q1010,484 1020,486L1070,494Q1080,498 1076,506L1068,522C1090,590 1135,690 1213,830V917Q1120,923 1040,913Q1022,908 1016,895V827C995,760 975,620 967,503Z"/></clipPath>
          <clipPath id="pocketClip2"><path d="M1079,498L1173,497Q1180,498 1187,523C1240,610 1290,670 1330,717V905Q1280,915 1228,916L1213,830C1135,690 1090,590 1075,522Z"/></clipPath>
          <clipPath id="pocketClipA"><path d="M685,735C730,660 775,580 800,495L885,470L925,700L815,870Q810,878 800,874L697,827Q687,820 685,810Z"/></clipPath>
        </defs>

        <!-- body -->
        <path d="M622,655V800C632,860 720,905 830,945C880,960 920,968 960,968H1330V560L900,400Z" fill="url(#base)"/>
        <path d="M650,575C730,535 820,470 862,382L925,400L960,520L800,495C760,555 680,605 650,632Z" fill="url(#wallL)"/>
        <!-- hub disc -->
        <path d="M880,395L921,345L983,359L1013,320H1022L1043,337L1120,326L1126,311H1137V326L1222,338L1247,320L1252,322L1243,347L1287,360L1330,350V520L1000,520L960,505L908,465L938,453L923,432L925,400Z" fill="#b5c9cf"/>
        <path d="M921,345L983,359L940,400L892,384Z" fill="#a7babf"/>
        <path d="M1013,320L1022,320L1043,337L983,359Z" fill="#a3b6bb"/>
        <path d="M1252,322L1243,347L1222,338Z" fill="#5f6c70"/>
        <path d="M1126,311L1120,326H1137V311Z" fill="#a8bbc0"/>
        <path d="M1330,353Q1300,358 1300,368Q1310,378 1330,388Z" fill="#5f6b6f"/>
        <path d="M1330,440L1323,451L1330,458Z" fill="#7d8b8f"/>
        <path d="M1330,463Q1290,468 1268,478Q1262,484 1272,490L1300,503L1330,550Z" fill="#7f8d91"/>
        <!-- far-left walls -->
        <path d="M622,660C680,605 760,555 795,490L800,495C775,580 730,660 685,735L679,735L622,760Z" fill="url(#wallD)"/>
        <path d="M622,750C660,725 700,685 745,640L679,735V805Q678,813 672,811C650,800 628,780 622,760Z" fill="#b8ccd2"/>
        <path d="M622,750C660,725 700,685 745,640" fill="none" stroke="#d9eef3" stroke-width="5" filter="url(#b2)"/>
        <path d="M680,733H686V812H680Z" fill="#8f9da1"/>
        <!-- pocket A -->
        <path d="M685,735C730,660 775,580 800,495L885,470L925,700L815,870Q810,878 800,874L697,827Q687,820 685,810Z" fill="#bdd1d7"/>
        <g clip-path="url(#pocketClipA)">
          <path d="M685,735C730,660 775,580 800,495L900,470V560C860,600 800,640 745,700C715,730 700,770 688,812Z" fill="url(#wallD)"/>
          <path d="M692,815C705,785 745,740 785,698C805,680 825,650 840,625" fill="none" stroke="#e0f4f8" stroke-width="6" filter="url(#b2)"/>
          <path d="M815,795H830V875H815Z" fill="#6f7c80"/>
        </g>
        <!-- rims left -->
        <path d="M650,574C730,535 820,470 862,381" fill="none" stroke="#b8ccd2" stroke-width="2"/>
        <path d="M622,657C680,605 760,555 797,487" fill="none" stroke="#b8ccd2" stroke-width="5"/>
        <path d="M682,733C730,660 775,580 800,490L883,469L907,465" fill="none" stroke="#b8ccd2" stroke-width="5"/>
        <!-- walls behind the fan -->
        <path d="M862,384L925,400Q928,405 920,410L880,425L923,432L938,453L908,465L883,470L840,490L840,420Z" fill="url(#wallT)"/>
        <path d="M862,381L925,397Q929,404 921,408" fill="none" stroke="#b5c9cf" stroke-width="3"/>
        <path d="M880,425L923,432L938,453" fill="none" stroke="#b5c9cf" stroke-width="4"/>
        <!-- pocket 1 -->
        <path d="M967,503L1003,486Q1010,484 1020,486L1070,494Q1080,498 1076,506L1068,522C1090,590 1135,690 1213,830V917Q1120,923 1040,913Q1022,908 1016,895V827C995,760 975,620 967,503Z" fill="url(#floor)"/>
        <g clip-path="url(#pocketClip1)">
          <rect x="960" y="480" width="260" height="210" fill="url(#pocketTop)"/>
          <path d="M960,500L1003,486V640L1006,800L1016,830H1000Z" fill="#6f7c80" filter="url(#b2)"/>
          <path d="M1010,487L1014,680" stroke="#b7cad0" stroke-width="6" filter="url(#b2)"/>
          <path d="M1075,522C1090,580 1130,680 1213,830V917L1183,917C1130,820 1098,720 1090,647C1085,600 1078,550 1075,522Z" fill="#7d8b8f"/>
          <path d="M1083,600C1090,650 1098,705 1130,780C1145,815 1165,860 1190,917" fill="none" stroke="#e6fafe" stroke-width="3" filter="url(#b2)"/>
        </g>
        <!-- pocket 2 -->
        <path d="M1079,498L1173,497Q1180,498 1187,523C1240,610 1290,670 1330,717V905Q1280,915 1228,916L1213,830C1135,690 1090,590 1075,522Z" fill="#c0d4da"/>
        <g clip-path="url(#pocketClip2)">
          <rect x="1070" y="490" width="270" height="210" fill="url(#pocketTop)"/>
          <path d="M1076,520L1084,497L1104,497L1118,585L1136,660Z" fill="#7f8d91" filter="url(#b2)"/>
          <path d="M1187,523C1240,610 1290,670 1330,717V805C1270,740 1230,680 1200,610C1195,580 1190,550 1187,523Z" fill="#7a888c" filter="url(#b2)"/>
        </g>
        <!-- pocket 3 -->
        <path d="M1183,498L1263,485L1300,503L1330,550V717C1290,670 1240,610 1187,523Q1180,505 1183,498Z" fill="#a9bbc0"/>
        <path d="M1263,485L1300,503L1330,550V655C1300,615 1285,570 1275,530C1270,510 1265,495 1263,485Z" fill="#6d7a7e" filter="url(#b2)"/>
        <path d="M1300,503L1330,550" stroke="#a9bcc1" stroke-width="6"/>
        <path d="M1187,523C1240,610 1290,670 1330,717" fill="none" stroke="#b3c7cc" stroke-width="7"/>
        <path d="M1071,522C1093,590 1138,690 1215,830" fill="none" stroke="#bcd0d6" stroke-width="8"/>
        <path d="M1213,830H1228V917L1213,917Z" fill="#6f7c80"/>
        <path d="M960,505L1003,827V913L985,910Z" fill="#9aacb1"/>
        <path d="M830,872L845,888L990,912L1003,913V870Z" fill="#c3d7dc"/>
        <path d="M960,503L967,500C975,620 995,760 1016,827H1003C985,760 965,620 960,503Z" fill="#b6cad0"/>
        <path d="M1003,827H1016V897L1003,885Z" fill="#78868a"/>
        <!-- boss -->
        <path d="M997,375V419A134.5,48 0 0 0 1266,419V375Z" fill="url(#bossSide)"/>
        <ellipse cx="1131.5" cy="375" rx="134.5" ry="48" fill="#b5c9cf"/>
        <ellipse cx="1132" cy="375.500" rx="78" ry="29" fill="url(#hole)"/>

        <!-- tool -->
        <path d="M522,170L569,251" fill="none" stroke="url(#gry)" stroke-width="24"/>
        <path d="M568,249L678,428" fill="none" stroke="url(#yel)" stroke-width="25"/>
        <circle cx="678" cy="428" r="12.500" fill="url(#cap)"/>

        <!-- cyan cut pattern -->
        <path d="M908,450L988,470L985,488L958,505L972,640L990,905L985,890L842,878L858,745L873,660Z" fill="#00ffff"/>
        <g fill="none" stroke="#d9ffff" stroke-width="1">
          <path d="M953,640L942,740M965,680L960,760M930,660L915,770M915,690L897,800M905,730L888,830M885,780L877,860M975,760L968,850M950,770L945,830M935,790L925,860M965,800L972,880M980,820L985,890M895,680L880,760M945,560L938,640M925,600L918,660M905,640L895,700M958,700L952,790M940,700L930,780M895,790L888,850M918,790L908,860"/>
        </g>
        <g fill="none" stroke="#c6d9de" stroke-width="1.600">
          <path d="M880,640L856,760L846,860M896,570L876,680L862,770M870,790L858,870M885,640L868,730M905,510L892,600"/>
        </g>
        <path d="M855,895L860,860M881,900L885,862M908,905L912,866M935,908L938,870M961,910L963,872" stroke="#c3d7dc" stroke-width="4"/>
        <path d="M970,640L985,900" stroke="#b6cad0" stroke-width="2"/>

        <!-- orange + pink -->
        <g fill="none" stroke-linecap="round">
          <path d="M945,492L925,497L885,540L868,558" stroke="#ffc000" stroke-width="3"/>
          <path d="M956,516L890,560" stroke="#fad7e2" stroke-width="4"/>
          <path d="M876,543L873,595L862,600" stroke="#ffc000" stroke-width="3"/>
          <path d="M860,597L858,675" stroke="#ffc000" stroke-width="5"/>
          <path d="M877,607L892,611M872,585L889,600M872,596L890,597" stroke="#ffc000" stroke-width="3"/>
          <path d="M876,535L873,600L877,600L890,605M870,643L886,660L890,675M870,600V643M847,640L855,690" stroke="#fad7e2" stroke-width="3"/>
          <path d="M848,723L848,877L842,885" stroke="#fad7e2" stroke-width="3"/>
          <path d="M808,785L822,848L832,882L838,884" stroke="#fad7e2" stroke-width="4"/>
          <path d="M828,722L826,800L830,850L835,880" stroke="#ffc000" stroke-width="6"/>
          <path d="M860,720L862,760L870,735L862,700M868,705L875,720" stroke="#ffc000" stroke-width="2.500"/>
          <path d="M925,832L985,878M927,840L988,887M928,848L990,897M932,860L992,910M936,870L985,910" stroke="#ffc000" stroke-width="2.500"/>
        </g>

        <!-- green -->
        <path d="M912,452L988,470" fill="none" stroke="#00ff00" stroke-width="4" stroke-dasharray="7 3"/>
        <g stroke="#00f000" stroke-width="3">
          <path d="M826,850l9,2M833,860l9,2M836,869l9,2M839,878l9,2M843,888l9,2"/>
          <path d="M854,856l9,2M858,866l9,2M860,875l9,2M863,884l9,2M867,894l9,2"/>
          <path d="M879,861l9,2M882,870l9,2M885,880l9,2M888,889l9,2M891,899l9,2"/>
          <path d="M906,865l9,2M909,875l9,2M911,884l9,2M914,894l9,2M918,904l9,2"/>
          <path d="M933,869l9,2M935,878l9,2M938,888l9,2M940,897l9,2M943,907l9,2"/>
          <path d="M958,872l9,2M961,882l9,2M964,901l9,2"/>
        </g>

        <!-- blue dashes -->
        <g fill="none" stroke="#0000ff">
          <path d="M688,445L802,620" stroke-width="3" stroke-dasharray="11 8"/>
          <path d="M788,460L804,515" stroke-width="3" stroke-dasharray="10 7"/>
          <path d="M750,660L815,620L888,543" stroke-width="3" stroke-dasharray="10 7"/>
          <path d="M762,652L782,640M795,620L810,612" stroke-width="3" stroke-dasharray="5 4"/>
          <path d="M815,650L927,833" stroke-width="3" stroke-dasharray="11 8"/>
          <path d="M835,630L847,667" stroke-width="3" stroke-dasharray="8 6"/>
          <path d="M806,475L810,600L808,782" stroke-width="7" stroke-dasharray="12 6"/>
          <path d="M829,452L827,722" stroke-width="9" stroke-dasharray="14 4"/>
          <path d="M847,427L848,722" stroke-width="5" stroke-dasharray="12 6"/>
          <path d="M860,397L862,622" stroke-width="6" stroke-dasharray="11 5"/>
          <path d="M873,392L873,526" stroke-width="6" stroke-dasharray="11 4"/>
          <path d="M903,497L903,793" stroke-width="4" stroke-dasharray="9 3"/>
          <path d="M911,497L911,800" stroke-width="4" stroke-dasharray="9 5"/>
          <path d="M903,785L935,855" stroke-width="6" stroke-dasharray="8 3"/>
        </g>
        <path d="M748,655L750,662" stroke="#ff0000" stroke-width="3"/>
        <g fill="none" stroke="#ff0000">
          <path d="M807,474L912,497" stroke-width="6" stroke-dasharray="11 6"/>
          <path d="M829,452L869,393" stroke-width="6" stroke-dasharray="9 4"/>
          <path d="M846,440L853,420" stroke-width="2" stroke-dasharray="6 6"/>
        </g>

        <!-- axes -->
        <path d="M1132,375V298" stroke="#0a2fd0" stroke-width="2"/>
        <path d="M1132,278L1125,300H1139Z" fill="#0a3fc8"/>
        <path d="M1132,375L1197,354" stroke="#2a9030" stroke-width="2"/>
        <path d="M1212,351L1195,348L1198,359Z" fill="#3a9a48"/>
        <path d="M1132,375L1184,399" stroke="#d03030" stroke-width="2"/>
        <path d="M1197,405L1186,394L1181,403Z" fill="#d83838"/>
        <text class="ax ax-z" x="1136" y="277">ZM</text>
        <text class="ax ax-y" x="1197" y="347">YM</text>
        <text class="ax ax-x" x="1180" y="418">XM</text>

        <!-- watermark -->
        <g class="wm-logo">
          <path d="M1083,873L1118,893V935L1083,955L1048,935V893Z" fill="#6cc0ec"/>
          <path d="M1048,935L1083,955L1118,935V905C1110,930 1090,935 1065,925Z" fill="#3b9ed0"/>
          <path d="M1048,893L1083,873L1098,882C1075,885 1060,895 1055,925L1048,935Z" fill="#a0d6f2"/>
          <path d="M1083,893L1101,904V925L1083,936L1065,925V904Z" fill="none" stroke="#d8eef8" stroke-width="3"/>
          <path d="M1083,898L1067,907L1083,917L1099,907Z" fill="#a8dcf4"/>
          <path d="M1083,917V932L1068,925V908Z" fill="#5aaed6"/>
          <path d="M1083,917V932L1098,925V908Z" fill="#3596c8"/>
        </g>
        <text class="wm-big" x="1127" y="921"><tspan class="wm-3d">3D</tspan><tspan dx="9">世界网</tspan></text>
        <text class="wm-small" x="1129" y="941">WWW.3DSJW.COM</text>
      </svg>
      <i class="edge"></i>
    </div>
  </div>

  <div class="dlg">
    <div class="dlg-title">
      <svg class="gear" viewBox="0 0 16 16"><path d="M8 1l1.200 2 2.300-.6.600 2.300 2.300.6L13.800 7.500 15 8l-1.200 1.500.6 2.200-2.300.6-.6 2.300L9.200 14 8 15l-1.200-1-2.300.6-.6-2.300-2.300-.6.600-2.200L1 8l1.200-.5-.6-2.200 2.300-.6.600-2.300 2.300.6z" fill="#fff"/><circle cx="8" cy="8" r="2.600" fill="#549eb8"/></svg>
      <span class="dlg-name">刀轨可视化</span>
      <svg class="close" viewBox="0 0 12 12"><path d="M1 1l10 10M11 1L1 11" stroke="#fff" stroke-width="1.700"/></svg>
    </div>
    <div class="dlg-body">
      <div class="list">
        <div class="lines">
          <div class="line on">GOTO/4.977,-132.759,20.000</div>
          <div class="line">GOTO/70.864,-116.423,-58.023</div>
          <div class="line">GOTO/72.139,-102.324,-72.150</div>
          <div class="line">GOTO/72.105,-101.731,-72.660</div>
          <div class="line">GOTO/71.907,-101.087,-73.060</div>
          <div class="line">GOTO/71.559,-100.436,-73.322</div>
        </div>
        <div class="vbar">
          <svg class="chev" viewBox="0 0 12 8"><path d="M1 7l5-5 5 5" fill="none" stroke="#555" stroke-width="1.800"/></svg>
          <span class="vthumb"></span>
          <svg class="chev chev-b" viewBox="0 0 12 8"><path d="M1 1l5 5 5-5" fill="none" stroke="#555" stroke-width="1.800"/></svg>
        </div>
        <div class="hbar">
          <svg class="chevh" viewBox="0 0 8 12"><path d="M7 1L2 6l5 5" fill="none" stroke="#555" stroke-width="1.800"/></svg>
          <span class="hthumb"></span>
          <svg class="chevh chevh-r" viewBox="0 0 8 12"><path d="M1 1l5 5-5 5" fill="none" stroke="#555" stroke-width="1.800"/></svg>
        </div>
      </div>

      <div class="sval sval-top">1</div>
      <div class="slider"><span class="handle"></span></div>
      <div class="srange srange-a"><span>1</span><span>822</span></div>
      <div class="feed">进给率 0.000000</div>

      <div class="tabs">
        <span class="dtab on tab1">重播</span><span class="dtab tab2">3D 动态</span><span class="dtab tab3">2D 动态</span><span class="dtab tab4">静态</span>
      </div>
      <div class="panel">
        <div class="ptitle">显示选项</div>
        <div class="prow m4"><span>刀具</span><span class="sel-box w61">刀具<i class="arr"></i></span></div>
        <div class="cb m5"><i class="box"></i>2D 除料</div>
        <div class="cb m8"><i class="box"></i>显示上一个 IPW</div>
        <div class="hr m5"></div>
        <div class="ptitle m6">运动显示</div>
        <div class="prow m3"><span>刀轨</span><span class="sel-box w166">全部<i class="arr"></i></span></div>
        <div class="prow m2"><span>刀具追踪</span><span class="sel-box w91">工具提示<i class="arr"></i></span></div>
        <div class="prow prow-off m2"><span>运动数</span><span class="num">10</span></div>
        <div class="cb m5"><i class="box"></i>在每一层暂停</div>
        <div class="cb m8"><i class="box"></i>显示刀具接触</div>
        <div class="hr m5"></div>
        <div class="bigbtn m3">过切和碰撞设置</div>
      </div>

      <div class="speed">动画速度</div>
      <div class="sval sval-nine">9</div>
      <div class="slider slider-b"><span class="handle handle-b"></span></div>
      <div class="srange srange-b"><span>1</span><span>10</span></div>
      <div class="player">
        <span class="pbtn"><svg class="pic"><use href="#p-first"/></svg></span>
        <span class="pbtn"><svg class="pic"><use href="#p-prev"/></svg></span>
        <span class="pbtn"><svg class="pic"><use href="#p-back"/></svg></span>
        <span class="pbtn"><svg class="pic"><use href="#p-play"/></svg></span>
        <span class="pbtn"><svg class="pic"><use href="#p-next"/></svg></span>
        <span class="pbtn"><svg class="pic"><use href="#p-last"/></svg></span>
        <span class="pbtn pbtn-off"><i class="stop"></i></span>
      </div>
    </div>
  </div>
</div>
</body>
</html>
```
FILE: styles.css
```css
* { box-sizing: border-box; }
html, body { margin: 0; padding: 0; }
body { width: 1330px; height: 968px; overflow: hidden; background: #fff; color: #222;
  font-family: "Noto Sans", "Noto Sans CJK SC", sans-serif; font-size: 15px; }
i { font-style: normal; display: block; }
.sprite { position: absolute; width: 0; height: 0; overflow: hidden; }
.app { position: relative; width: 1330px; height: 968px; overflow: hidden; display: flex; flex-direction: column; }

/* top strip */
.topstrip { height: 8px; overflow: hidden; background: #fff; display: flex; flex: none; }
.tick { width: 1px; height: 3px; background: #e4e4e4; flex: none; }
.t1 { margin-left: 45px; } .t2 { margin-left: 74px; } .t3 { margin-left: 44px; }
.blueb { width: 15px; height: 1px; background: #1a22e0; margin-left: 117px; flex: none; }
.mark { height: 2px; background: #444; flex: none; width: 1px; }
.m-a { width: 4px; margin-left: 705px; }
.m-b { margin-left: 14px; }
.m-c { width: 3px; margin-left: 35px; }
.m-d { width: 3px; margin-left: 50px; }
.m-e { width: 4px; margin-left: 14px; }

/* tabs */
.tabbar { height: 32px; background: #dcdcdc; display: flex; flex: none; font-size: 16px; }
.filebtn { width: 14px; background: #549eb8; margin-right: 2px; }
.tab { width: 58px; text-align: center; line-height: 33px; color: #222; white-space: nowrap; }
.tab:last-child { width: 90px; }
.tab.active { background: #fff; color: #0a7396; border-top: 1px solid #b9b9b9; line-height: 32px; }

/* ribbon */
.ribbon { height: 106px; display: flex; flex: none; border-bottom: 1px solid #d9d9d9; font-size: 14px; background: #fff; overflow: hidden; }
.grp { display: flex; flex-direction: column; padding-top: 5px; flex: none; position: relative; }
.grp::after { content: ""; position: absolute; right: 0; top: 5px; bottom: 4px; width: 1px; background: #dcdcdc; }
.g-insert { width: 595px; } .g-show { width: 94px; } .g-part { width: 155px; } .g-ana { width: 80px; }
.g-body { width: 147px; } .g-gc { width: 150px; } .g-sync { width: 110px; }
.g-sync::after { display: none; }
.grp-body { height: 81px; display: flex; gap: 9px; padding-left: 1px; align-items: flex-start; }
.grp-label { height: 19px; padding-bottom: 2px; display: flex; align-items: center; color: #0a7396; white-space: nowrap; line-height: 17px; }
.grp-label .arr { margin-left: auto; }
.lb-insert { margin-left: 23px; } .g-insert .grp-label { padding-right: 8px; }
.lb-show { margin-left: 23px; } .g-show .grp-label { padding-right: 8px; }
.lb-part { margin-left: 54px; } .g-part .grp-label { padding-right: 12px; }
.lb-ana { margin-left: 15px; } .g-ana .grp-label { padding-right: 9px; }
.lb-body { margin-left: 42px; } .g-body .grp-label { padding-right: 12px; }
.lb-gc { margin-left: 2px; } .g-gc .grp-label { padding-right: 8px; }
.lb-sync { margin-left: 58px; }

.tool { display: flex; flex-direction: column; align-items: center; white-space: nowrap; line-height: 20px; }
.tool .arr { margin-top: 6px; }
.ic36 { width: 36px; height: 36px; display: block; }
.ic20 { width: 20px; height: 20px; display: block; flex: none; }
.ic18 { width: 18px; height: 18px; display: block; flex: none; }
.off { color: #c4c4c4; }
.smcol { width: 17px; display: flex; flex-direction: column; gap: 7px; }
.smcol svg { margin-left: -2px; }
.vsep { width: 1px; height: 78px; background: #dcdcdc; flex: none; }
.v2 { margin-right: 3px; }
.t-attr { margin: 0 -1px 0 1px; }
.t-more { margin-left: 2px; width: 38px; }
.morebox { width: 38px; height: 34px; border: 1px solid #d6d6d6; border-radius: 3px; display: flex; align-items: center; justify-content: center; margin-bottom: 2px; margin-top: -1px; }
.arr { width: 0; height: 0; border-left: 5px solid transparent; border-right: 5px solid transparent; border-top: 5px solid #222; flex: none; }
.arr-gray { border-top-color: #aaa; }

.showgrid { display: grid; grid-template-columns: 40px 40px; grid-template-rows: 25px 26px 26px; margin-left: 12px; }
.cell { display: flex; align-items: center; gap: 8px; }
.wpgrid { display: grid; grid-template-columns: 26px 26px; grid-template-rows: 25px 26px 26px; margin-left: 10px; }
.t-ipw { margin-left: -9px; }
.t-draft { margin-left: 11px; }
.t-pt { margin-left: 9px; width: 36px; }
.t-ext { margin-left: -3px; }
.gc-body { flex-direction: column; gap: 9px; padding-left: 4px; padding-top: 7px; }
.gcrow { display: flex; align-items: center; gap: 4px; height: 20px; }
.gcsep { width: 1px; height: 18px; background: #dcdcdc; flex: none; margin-left: -2px; }
.g-gc .gcrow:last-child .gcsep { margin-left: 0; }
.t-move { margin-left: 12px; width: 44px; }
.t-move > svg { height: 38px; width: 40px; }
.synclist { display: flex; flex-direction: column; margin-left: -5px; gap: 5px; margin-top: 1px; }
.syncrow { display: flex; align-items: center; gap: 3px; color: #c8c8c8; white-space: nowrap; height: 20px; }

/* quick bar */
.quickbar { height: 36px; flex: none; display: flex; align-items: center; border-bottom: 2px solid #a9a9a9; overflow: hidden; }
.qtext { width: 7px; }
.q-first { margin-left: 1px; }
.qsep { width: 1px; height: 28px; background: #d8d8d8; flex: none; }
.q-s0 { margin: 0 5px 0 6px; }
.qi { width: 24px; height: 24px; display: flex; align-items: center; justify-content: center; flex: none; }
.qa { width: 14px; display: flex; justify-content: center; flex: none; }
.combo { width: 424px; height: 24px; margin-left: 13px; border: 1px solid #aaa; display: flex; align-items: center; justify-content: flex-end; padding-right: 6px; flex: none; }
.q-f1 { margin-left: 7px; }
.q-m1 { margin-left: 1px; } .q-m2 { margin-left: 2px; } .q-m3 { margin-left: 3px; }
.q-s1 { margin: 0 8px 0 7px; }
.q-s2 { margin-left: 9px; }

/* main */
.main { flex: 1; display: flex; min-height: 0; }
.nav { width: 120px; flex: none; background: #fff; overflow: hidden; display: flex; flex-direction: column; border-right: 1px solid #ddd; }
.nav-title { height: 33px; line-height: 33px; margin-left: -5px; white-space: nowrap; border-bottom: 1px solid #e4e4e4; flex: none; }
.nav-head { height: 24px; background: #eeeeee; border-bottom: 1px solid #e0e0e0; flex: none; }
.rows { flex: none; font-size: 16px; }
.row { height: 24px; padding-top: 2px; line-height: 21px; border-bottom: 1px solid #ececec; white-space: nowrap; display: flex; align-items: center; overflow: hidden; }
.row:nth-child(even) { background: #fafafa; }
.r-crop { margin-left: -3px; }
.r-nofold { padding-left: 1px; font-size: 15px; }
.r-op { padding-top: 0; }
.fold { width: 16px; height: 16px; flex: none; margin-right: 1px; }
.warn { width: 8px; height: 17px; margin-left: 5px; flex: none; }
.opn { width: 15px; height: 15px; margin-left: 4px; margin-right: 1px; flex: none; }
.sel { background: #8bc0d0; height: 23px; line-height: 25px; padding-left: 3px; }
.nav-hscroll { height: 19px; margin-top: 9px; background: #cbcbcb; flex: none; }
.nav-acc { height: 26px; margin-top: 8px; margin-left: -26px; border-top: 2px solid #aaa; color: #0a80aa; font-size: 16px; line-height: 25px; border-bottom: 2px solid #d8d8d8; box-sizing: content-box; flex: none; }
.nav-acc2 { margin-top: 0; margin-left: -24px; border-top: 0; border-bottom: 0; line-height: 34px; }

.viewport { flex: 1; position: relative; background: #fff; min-width: 0; }
.scene { display: block; width: 1210px; height: 786px; position: absolute; left: 0; top: 0; }
.edge { position: absolute; right: 0; top: 0; width: 1px; height: 653px; background: #333; }
.ax { font-size: 11.500px; }
.ax-z { fill: #4a6fe8; } .ax-y { fill: #4b9a55; } .ax-x { fill: #d04040; }
.wm-logo { opacity: .72; }
.wm-big { font-size: 36px; font-weight: 700; fill: #fff; fill-opacity: .48; font-family: "Liberation Sans", "Noto Sans CJK SC", sans-serif; }
.wm-3d { font-size: 46px; }
.wm-small { font-size: 13px; font-weight: 700; fill: #fff; fill-opacity: .5; letter-spacing: 4.400px; font-family: "Liberation Sans", sans-serif; }

/* dialog */
.dlg { position: absolute; left: 120px; top: 101px; width: 380px; height: 867px; background: #efefef; }
.dlg-title { height: 27px; background: #549eb8; display: flex; align-items: center; padding-left: 10px; color: #eef6f9; font-size: 16px; }
.gear { width: 15px; height: 15px; flex: none; }
.dlg-name { margin-left: 9px; line-height: 20px; padding-bottom: 0; }
.close { width: 12px; height: 12px; margin-left: auto; margin-right: 10px; }
.dlg-body { padding: 8px 10px 0; }
.list { margin-left: 2px; width: 358px; height: 148px; border: 1px solid #aaa; padding: 1px; display: grid; grid-template-columns: 334px 20px; grid-template-rows: 124px 20px; background: #f0f0f0; }
.lines { background: #fff; font-size: 15.700px; }
.line { height: 20px; line-height: 20px; white-space: nowrap; color: #222; }
.line.on { background: #8bc0d0; }
.vbar { display: flex; flex-direction: column; align-items: center; }
.chev { width: 11px; height: 8px; margin-top: 7px; flex: none; }
.chev-b { margin-top: auto; margin-bottom: 8px; }
.vthumb { width: 20px; height: 53px; background: #c9c9c9; margin-top: 7px; }
.hbar { grid-column: 1 / 3; display: flex; align-items: center; padding-left: 6px; }
.chevh { width: 8px; height: 11px; flex: none; }
.hthumb { width: 197px; height: 19px; background: #c9c9c9; margin-left: 8px; }
.chevh-r { margin-left: 100px; }

.sval { height: 20px; line-height: 18px; }
.sval-top { margin: 4px 0 0 9px; }
.slider { margin: 3px 9px 0; height: 24px; background: linear-gradient(#aaa, #aaa) center / 100% 4px no-repeat; display: flex; }
.handle { width: 13px; height: 24px; background: #549eb8; border: 1px solid #555; display: block; }
.srange { display: flex; justify-content: space-between; height: 20px; line-height: 18px; }
.srange-a { margin: 3px 0 0 6px; }
.feed { margin-top: 7px; height: 20px; line-height: 18px; }
.tabs { margin-top: 3px; display: flex; height: 33px; align-items: flex-end; position: relative; }
.dtab { height: 31px; line-height: 30px; text-align: center; border: 1px solid #ccc; border-bottom: 0; white-space: nowrap; }
.dtab.on { height: 34px; background: #fff; border-color: #c4c4c4; line-height: 33px; margin-bottom: -1px; position: relative; }
.tab1 { width: 62px; } .tab2 { width: 68px; } .tab3 { width: 70px; } .tab4 { width: 58px; }
.panel { height: 400px; background: #fff; border: 1px solid #c4c4c4; padding: 6px 6px 0; }
.ptitle { height: 20px; line-height: 18px; }
.prow { display: flex; justify-content: space-between; align-items: center; }
.prow > span:first-child { padding-bottom: 2px; }
.prow-off { color: #bdbdbd; }
.sel-box { height: 28px; border: 1px solid #aaa; display: flex; align-items: center; justify-content: space-between; padding: 0 5px 2px 3px; background: #fff; white-space: nowrap; }
.w61 { width: 61px; } .w166 { width: 166px; } .w91 { width: 91px; }
.num { width: 90px; height: 26px; border: 1px solid #e2e2e2; background: #fafafa; text-align: right; line-height: 24px; padding-right: 4px; font-size: 17px; color: #a9a9a9; }
.cb { display: flex; align-items: center; height: 18px; line-height: 16px; color: #bdbdbd; white-space: nowrap; }
.box { width: 18px; height: 18px; border: 1px solid #d8d8d8; background: #fff; margin-right: 4px; flex: none; }
.hr { height: 1px; background: #d4d4d4; }
.bigbtn { height: 32px; border: 1px solid #aaa; text-align: center; line-height: 30px; }
.m2 { margin-top: 2px; } .m3 { margin-top: 3px; } .m4 { margin-top: 4px; } .m5 { margin-top: 5px; } .m6 { margin-top: 6px; } .m8 { margin-top: 8px; }
.speed { margin-top: 5px; height: 20px; line-height: 18px; }
.sval-nine { margin: 5px 0 0 306px; }
.slider-b { justify-content: flex-end; }
.handle-b { margin-right: 37px; }
.srange-b { margin: 4px 0 0 6px; }
.player { margin: 3px 0 0 62px; display: flex; gap: 2px; }
.pbtn { width: 32px; height: 32px; border: 1px solid #aaa; display: flex; align-items: center; justify-content: center; }
.pbtn-off { border-color: #d4d4d4; }
.pic { width: 20px; height: 16px; display: block; }
.stop { width: 12px; height: 12px; background: #a89696; }
```
